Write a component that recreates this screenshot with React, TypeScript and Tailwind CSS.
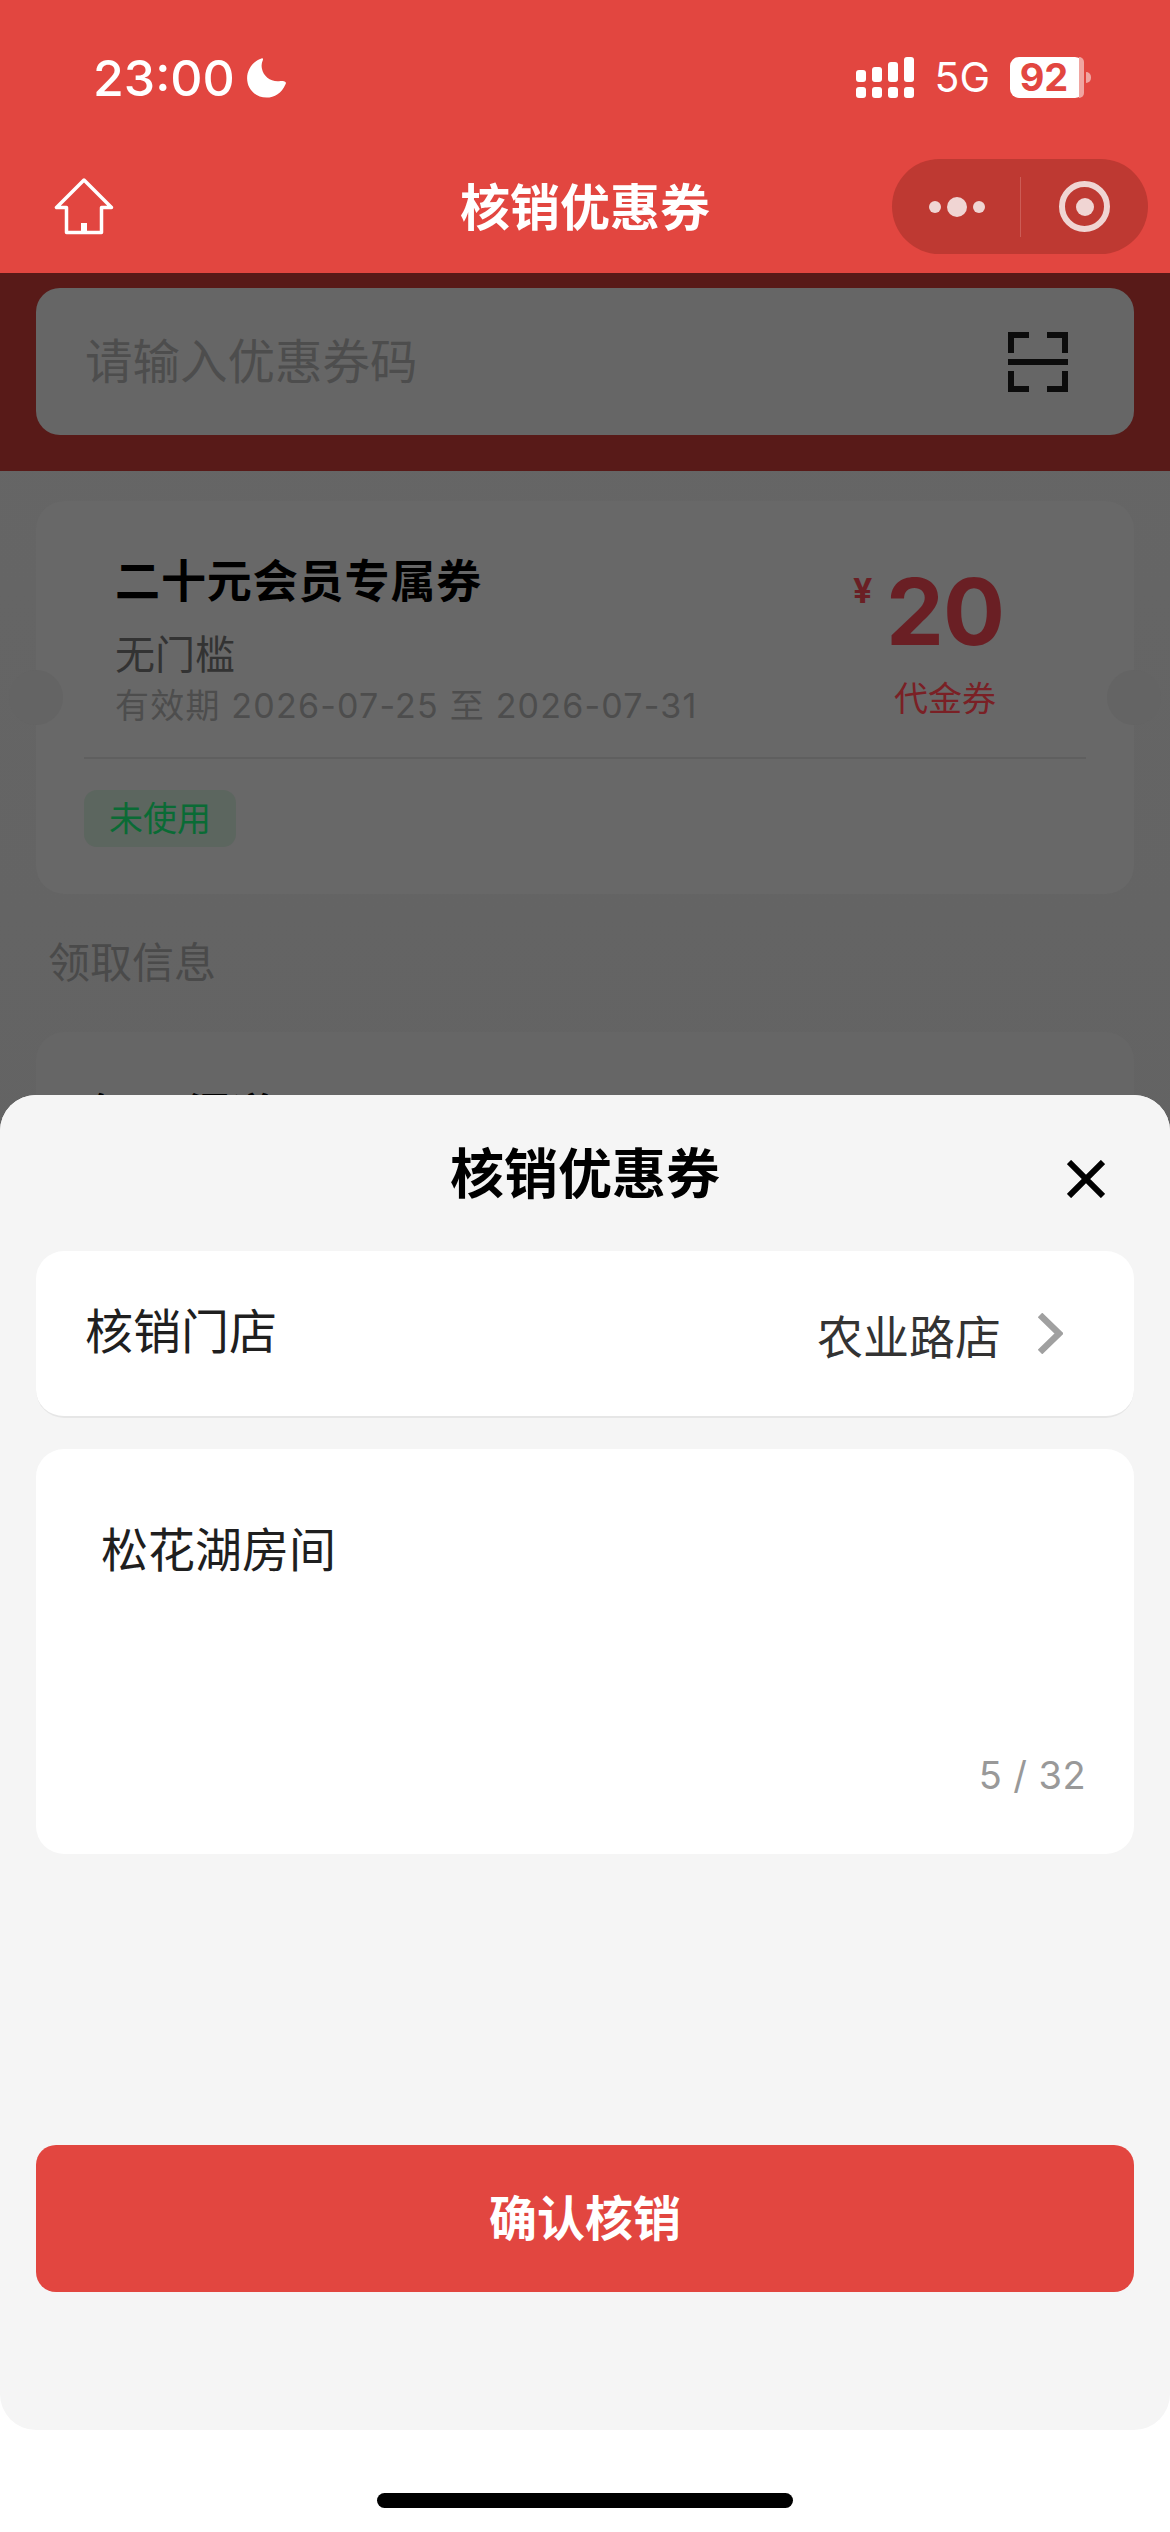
import React from "react";

const CJK = "font-['Inter','Noto_Sans_CJK_SC',sans-serif]";

// iOS status bar icons
function SignalIcon() {
  return (
    <svg width="58" height="41" viewBox="0 0 58 41" fill="#fff">
      <rect x="0" y="13" width="10" height="12" rx="3" />
      <rect x="16" y="10" width="10" height="15" rx="3" />
      <rect x="32" y="5" width="10" height="20" rx="3" />
      <rect x="48" y="0" width="10" height="25" rx="3" />
      <rect x="0" y="30" width="10" height="11" rx="3" />
      <rect x="16" y="30" width="10" height="11" rx="3" />
      <rect x="32" y="30" width="10" height="11" rx="3" />
      <rect x="48" y="30" width="10" height="11" rx="3" />
    </svg>
  );
}

function MoonIcon() {
  return (
    <svg width="40" height="40" viewBox="0 0 40 40" fill="#fff">
      <path d="M14.5 0.5C15.5 0 16.3 0.9 15.9 1.9C14.6 4.6 14.3 7.5 14.9 10.6C16.4 18.6 23.8 23.9 32 23.2C34.5 23 36.5 22.5 38.4 24C39.2 24.7 39 25.6 38.4 26.5C34.7 35 27.5 39.6 19.5 39.6C8.7 39.6 0.1 31.3 0.1 20.3C0.1 11.5 6 3.3 14.5 0.5Z" />
    </svg>
  );
}

function HomeIcon() {
  return (
    <svg width="60" height="58" viewBox="0 0 60 58" fill="none" stroke="#fff" strokeWidth="3.5" strokeLinejoin="round" strokeLinecap="round">
      <path d="M30 2L2.5 29.5H12.5V54.5H47.5V29.5H57.5Z" />
      <rect x="27" y="45" width="6" height="9" fill="#fff" stroke="none" />
    </svg>
  );
}

function ScanIcon() {
  return (
    <svg width="60" height="60" viewBox="0 0 60 60" fill="none" stroke="#0c0c0c" strokeWidth="6">
      <path d="M21 3H3V21" />
      <path d="M39 3H57V21" />
      <path d="M0 30H60" />
      <path d="M3 39V57H21" />
      <path d="M57 39V57H39" />
    </svg>
  );
}

function Capsule() {
  return (
    <div className="flex h-[95px] w-[256px] items-center rounded-full bg-[#be3932]">
      <div className="flex w-[128px] items-center justify-center gap-[6px] pl-[2px]">
        <span className="h-[12px] w-[12px] rounded-full bg-[#f0d5d3]" />
        <span className="h-[20px] w-[20px] rounded-full bg-[#f0d5d3]" />
        <span className="h-[12px] w-[12px] rounded-full bg-[#f0d5d3]" />
      </div>
      <div className="h-[60px] w-px bg-[#cc5c56]" />
      <div className="flex flex-1 items-center justify-center">
        <span className="flex h-[51px] w-[51px] items-center justify-center rounded-full border-[6px] border-[#f0d5d3]">
          <span className="h-[18px] w-[18px] rounded-full bg-[#f0d5d3]" />
        </span>
      </div>
    </div>
  );
}

function Header() {
  return (
    <div className="h-[273px] bg-[#e24640] text-white">
      <div className="flex h-[159px] items-start justify-between pt-[52px] pl-[93px] pr-[79px]">
        <div className="flex items-center gap-[12px]">
          <span className="text-[50px] leading-[52px] font-medium">23:00</span>
          <MoonIcon />
        </div>
        <div className="flex items-center pt-[5px]">
          <SignalIcon />
          <span className="mx-[20px] text-[41px] leading-[41px]">5G</span>
          <div className="relative flex h-[41px] w-[74px] items-center justify-center rounded-[9px] bg-white">
            <span className="pr-[6px] text-[38px] leading-[41px] font-bold text-[#e24640]">92</span>
            <span className="absolute top-0 right-0 h-full w-[5px] rounded-r-[9px] bg-[#f0a5a1]" />
          </div>
          <span className="ml-[2px] h-[11px] w-[5px] rounded-r-full bg-[#f0a5a1]" />
        </div>
      </div>
      <div className="relative flex h-[95px] items-center justify-center">
        <span className="absolute left-[54px] top-[19px]">
          <HomeIcon />
        </span>
        <span className="pt-[3px] text-[50px] leading-[60px] font-semibold">核销优惠券</span>
        <span className="absolute right-[22px] top-0">
          <Capsule />
        </span>
      </div>
    </div>
  );
}

function CouponCard() {
  return (
    <div className="relative mx-[36px] mt-[30px] h-[393px] rounded-[28px] bg-[#686868] px-[48px] pt-[54px]">
      <span className="absolute left-[-27px] top-[169px] h-[55px] w-[54px] rounded-full bg-[#646464]" />
      <span className="absolute right-[-27px] top-[169px] h-[55px] w-[54px] rounded-full bg-[#646464]" />
      <div className="flex justify-between">
        <div className="pl-[31px]">
          <p className="text-[45px] leading-[54px] font-bold tracking-[0.9px] text-black">二十元会员专属券</p>
          <p className="mt-[22px] text-[40px] leading-[48px] text-[#333333]">无门槛</p>
          <p className="mt-[5px] text-[34px] leading-[44px] tracking-[1.2px] whitespace-nowrap text-[#4d4d4d]">
            有效期 2026-07-25 至 2026-07-31
          </p>
        </div>
        <div className="relative mr-[85px] mt-[9px] flex w-[112px] flex-col items-center text-[#6a1f24]">
          <span className="absolute top-[10px] left-[-36px] text-[34px] leading-[34px] font-bold">¥</span>
          <span className="text-[92px] leading-[96px] font-bold tracking-[-1px]">20</span>
          <span className="mt-[17px] text-[34px] leading-[44px] whitespace-nowrap text-[#7a2025]">代金券</span>
        </div>
      </div>
      <div className="mt-[29px] h-[2px] bg-[#5f5f5f]" />
      <div className="mt-[31px] flex h-[57px] w-[152px] items-center justify-center rounded-[13px] bg-[#5c665f]">
        <span className="text-[34px] leading-[40px] text-[#0a6b35]">未使用</span>
      </div>
    </div>
  );
}

function Background() {
  return (
    <div className="h-[2259px] bg-linear-to-b from-[#666666] to-[#5f5f5f]">
      <div className="h-[198px] bg-[#581a18] px-[36px] pt-[15px]">
        <div className="flex h-[147px] items-center justify-between rounded-[24px] bg-[#666666] pr-[66px] pl-[49px]">
          <span className="pt-[1px] text-[47.5px] leading-[60px] text-[#4d4d4d]">请输入优惠券码</span>
          <ScanIcon />
        </div>
      </div>
      <CouponCard />
      <p className="mt-[44px] pl-[48px] text-[42px] leading-[50px] text-[#4a4a4a]">领取信息</p>
      <div className="mx-[36px] mt-[44px] h-[400px] rounded-[28px] bg-[#666666] pt-[56px] pl-[52px]">
        <p className="text-[44px] leading-[54px] font-bold text-black">领取 渠道</p>
      </div>
    </div>
  );
}

function VerifySheet() {
  return (
    <div className="absolute inset-x-0 bottom-0 h-[1437px] rounded-t-[36px] bg-white">
      <div className="relative flex h-[1335px] flex-col rounded-[36px] bg-[#f5f5f5] px-[36px]">
        <div className="flex h-[156px] items-start justify-center pt-[47px]">
          <span className="text-[54px] leading-[66px] font-semibold text-black">核销优惠券</span>
          <svg className="absolute top-[65px] right-[65px]" width="38" height="38" viewBox="0 0 38 38" fill="none" stroke="#000" strokeWidth="6">
            <path d="M2 2L36 36M36 2L2 36" />
          </svg>
        </div>
        <div className="flex h-[167px] items-center justify-between rounded-[28px] border-b-2 border-[#e6e6e6] bg-white pr-[71px] pl-[49px]">
          <span className="mb-[3px] text-[48px] leading-[60px] text-[#1f1f1f]">核销门店</span>
          <div className="flex items-center">
            <span className="mt-[6px] text-[46px] leading-[60px] text-[#333333]">农业路店</span>
            <svg className="ml-[37px]" width="25" height="41" viewBox="0 0 25 41" fill="none" stroke="#a0a0a0" strokeWidth="6.5">
              <path d="M2 2L21 20.5L2 39" />
            </svg>
          </div>
        </div>
        <div className="relative mt-[31px] h-[405px] rounded-[28px] bg-white pt-[72px] pl-[65px]">
          <p className="text-[47px] leading-[58px] text-[#1f1f1f]">松花湖房间</p>
          <span className="absolute right-[48px] bottom-[56px] text-[38px] leading-[46px] tracking-[0.4px] text-[#999999]">5 / 32</span>
        </div>
        <button className="mt-[291px] h-[147px] rounded-[20px] bg-[#e24640] text-[48px] leading-[60px] font-bold text-white">
          确认核销
        </button>
      </div>
      <div className="absolute bottom-[24px] left-[377px] h-[15px] w-[416px] rounded-full bg-black" />
    </div>
  );
}

export default function App() {
  return (
    <div className={`relative h-[2532px] w-[1170px] overflow-hidden ${CJK}`}>
      <Header />
      <Background />
      <VerifySheet />
    </div>
  );
}
